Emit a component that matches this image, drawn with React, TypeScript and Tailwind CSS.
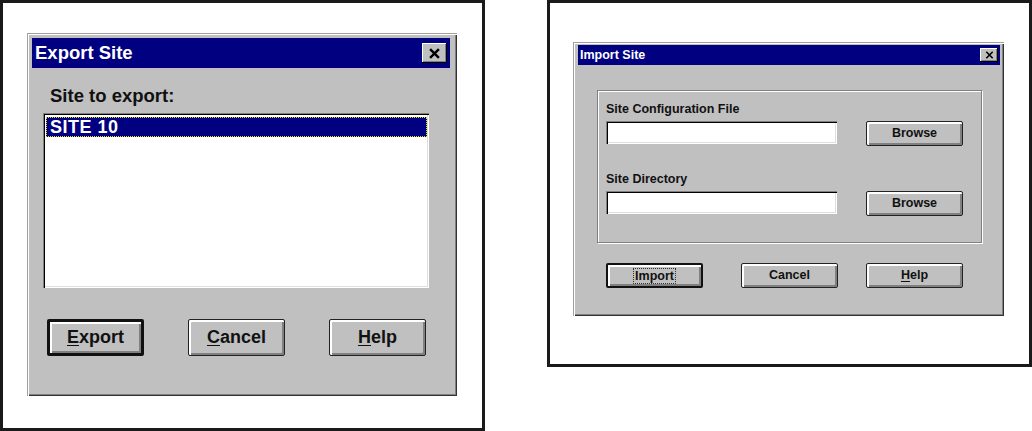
// App.tsx – Export / Import site dialogs (Win95 style)
import React from 'react';

const FONT = { fontFamily: '"Liberation Sans", Arial, sans-serif' };

function CloseBox({ big }: { big?: boolean }) {
  const size = big ? 'w-[25px] h-[20px]' : 'w-[18px] h-[14px]';
  return (
    <div
      className={`${size} bg-[#c0c0c0] flex items-center justify-center shadow-[inset_-1px_-1px_#000,inset_1px_1px_#fff,inset_-2px_-2px_#808080]`}
    >
      <svg
        viewBox="0 0 10 10"
        className={big ? 'w-[13px] h-[11px]' : 'w-[9px] h-[8px]'}
      >
        <path d="M1 1 L9 9 M9 1 L1 9" stroke="#000" strokeWidth={big ? 2.2 : 2} />
      </svg>
    </div>
  );
}

function Btn({
  children,
  isDefault,
  big,
}: {
  children: React.ReactNode;
  isDefault?: boolean;
  big?: boolean;
}) {
  const dims = big
    ? 'w-[97px] h-[37px] text-[18px]'
    : 'w-[97px] h-[25px] text-[12.5px]';
  const frame = isDefault
    ? big
      ? 'border-[3px] border-[#111]'
      : 'border-2 border-[#111]'
    : 'border border-[#222]';
  return (
    <div
      className={`${dims} ${frame} rounded-[2px] bg-[#c0c0c0] flex items-center justify-center font-bold text-[#111] shadow-[inset_2px_2px_#fff,inset_-2px_-2px_#808080]`}
    >
      {children}
    </div>
  );
}

const sunken =
  'bg-white shadow-[inset_1px_1px_#808080,inset_2px_2px_#000,inset_-1px_-1px_#fff,inset_-2px_-2px_#dfdfdf]';

function ExportDialog() {
  return (
    <div className="w-[430px] h-[363px] bg-[#c0c0c0] p-[5px] pr-[7px] shadow-[inset_1px_1px_#a0a0a0,inset_2px_2px_#fff,inset_-1px_-1px_#333,inset_-2px_-2px_#808080]">
      <div className="h-[30px] bg-[#000080] flex items-center justify-between pl-[3px] pr-[3px]">
        <span className="text-white font-bold text-[18.5px] leading-none">Export Site</span>
        <CloseBox big />
      </div>
      <div className="pl-[18px] pt-[17px] text-[18.5px] font-bold text-[#111] leading-[21px]">
        Site to export:
      </div>
      <div className={`ml-[11px] mt-[7px] w-[386px] h-[175px] ${sunken} pt-[4px] pl-[3px] pr-[2px]`}>
        <div className="h-[20px] bg-[#000080] outline outline-1 outline-dotted outline-[#e8e000] -outline-offset-1 flex items-center pl-[4px]">
          <span className="text-white font-bold text-[18px] leading-none tracking-[0.5px]">SITE 10</span>
        </div>
      </div>
      <div className="flex mt-[31px] ml-[15px] gap-[44px]">
        <Btn big isDefault>
          <span>
            <span className="underline underline-offset-2">E</span>xport
          </span>
        </Btn>
        <Btn big>
          <span>
            <span className="underline underline-offset-2">C</span>ancel
          </span>
        </Btn>
        <Btn big>
          <span>
            <span className="underline underline-offset-2">H</span>elp
          </span>
        </Btn>
      </div>
    </div>
  );
}

function FieldRow({ label, top }: { label: string; top: string }) {
  return (
    <div className={top}>
      <div className="text-[12.5px] font-bold text-[#111] leading-[15px]">{label}</div>
      <div className="flex items-start mt-[4px]">
        <div className={`w-[231px] h-[23px] ${sunken}`} />
        <div className="ml-[29px]">
          <Btn>Browse</Btn>
        </div>
      </div>
    </div>
  );
}

function ImportDialog() {
  return (
    <div className="w-[431px] h-[274px] bg-[#c0c0c0] pt-[3px] pl-[5px] pr-[4px] shadow-[inset_1px_1px_#a0a0a0,inset_2px_2px_#fff,inset_-1px_-1px_#333,inset_-2px_-2px_#808080]">
      <div className="h-[20px] bg-[#000080] flex items-center justify-between pl-[2px] pr-[2px]">
        <span className="text-white font-bold text-[12.5px] leading-none">Import Site</span>
        <CloseBox />
      </div>
      <div className="ml-[19px] mt-[25px] w-[385px] h-[153px] border border-[#808080] shadow-[inset_1px_1px_#fff,1px_1px_#fff] pl-[8px] pt-[11px]">
        <FieldRow label="Site Configuration File" top="" />
        <FieldRow label="Site Directory" top="mt-[26px]" />
      </div>
      <div className="flex ml-[28px] mt-[20px]">
        <Btn isDefault>
          <span className="border border-dotted border-[#333] px-[1px] leading-[14px]">Import</span>
        </Btn>
        <div className="ml-[38px]">
          <Btn>Cancel</Btn>
        </div>
        <div className="ml-[28px]">
          <Btn>
            <span>
              <span className="underline underline-offset-2">H</span>elp
            </span>
          </Btn>
        </div>
      </div>
    </div>
  );
}

export default function App() {
  return (
    <div className="w-[1032px] h-[431px] bg-white flex items-start" style={FONT}>
      <div className="w-[485px] h-[431px] border-[3px] border-[#1a1a1a] pl-[24px] pt-[30px]">
        <ExportDialog />
      </div>
      <div className="ml-[62px] w-[485px] h-[367px] border-[3px] border-[#1a1a1a] pl-[23px] pt-[39px]">
        <ImportDialog />
      </div>
    </div>
  );
}
